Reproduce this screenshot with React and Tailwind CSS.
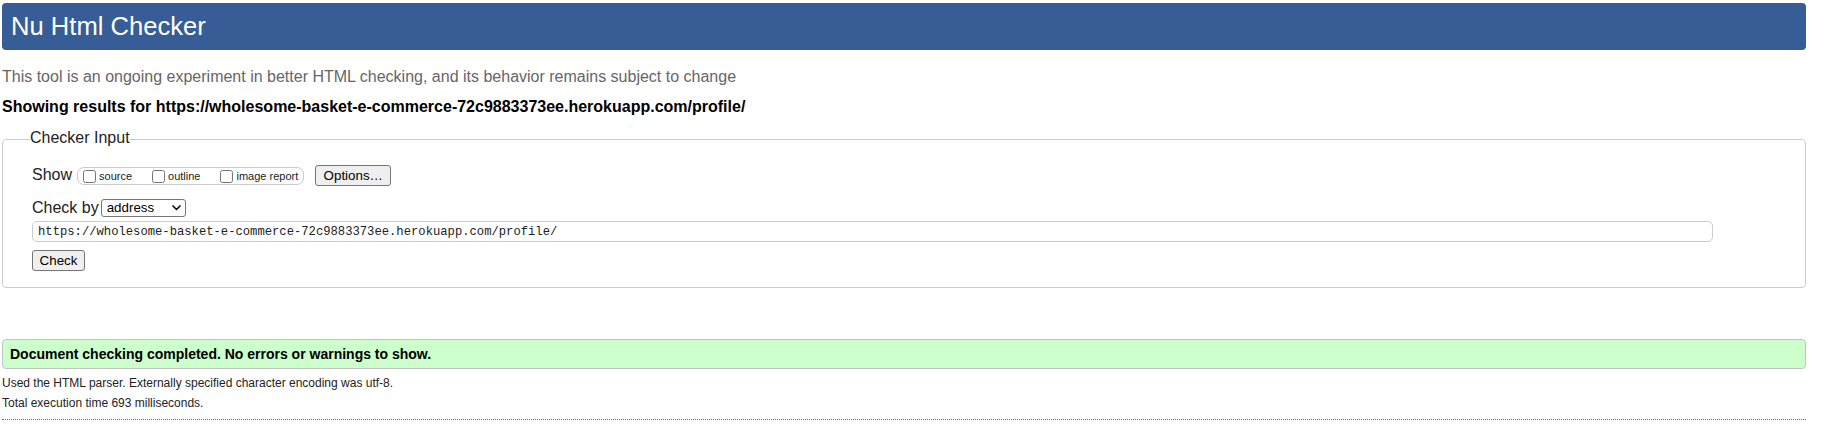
export default function App() {
  const url = 'https://wholesome-basket-e-commerce-72c9883373ee.herokuapp.com/profile/';

  return (
    <div className="min-h-screen bg-white font-['Liberation_Sans',Arial,sans-serif] text-black">
      <div className="ml-[2px] w-[1804px] pt-[3px]">
        {/* Title bar */}
        <h1 className="h-[47px] rounded-[4px] bg-[#365D95] pl-[9px] text-[25.6px] font-normal leading-[46px] text-white">
          Nu Html Checker
        </h1>

        <p className="mt-[17px] text-[16px] leading-[20px] text-[#666]">
          This tool is an ongoing experiment in better HTML checking, and its behavior remains subject to change
        </p>
        <p className="mt-[10px] text-[16px] font-bold leading-[20px]">Showing results for {url}</p>

        {/* Checker input */}
        <fieldset className="mt-[11px] rounded-[4px] border border-[#ccc] pb-[16px] pl-[29px]">
          <legend className="-ml-[2px] pb-[2px] text-[16px] leading-[20px] text-[#222]">Checker Input</legend>

          <div className="mt-[15px] flex items-start">
            <span className="text-[16px] leading-[20px] text-[#222]">Show</span>
            <div className="ml-[5px] mt-[2px] flex h-[18px] items-center gap-[20px] rounded-[7px] border border-[#ccc] px-[5px]">
              {['source', 'outline', 'image report'].map((label) => (
                <label key={label} className="flex items-center text-[11px] leading-[13px] text-[#222]">
                  <input type="checkbox" className="m-0 h-[13px] w-[13px]" />
                  <span className="ml-[3px]">{label}</span>
                </label>
              ))}
            </div>
            <button className="ml-[11px] h-[21px] w-[76px] rounded-[3px] border border-[#767676] bg-[#efefef] text-[13.33px] leading-[19px]">
              Options…
            </button>
          </div>

          <div className="mt-[13px] flex items-start">
            <span className="text-[16px] leading-[18px] text-[#222]">Check by</span>
            <div className="ml-[2px] flex h-[18px] w-[85px] items-center justify-between rounded-[3px] border border-[#767676] bg-white pl-[5px] pr-[4px] text-[13.33px] leading-[16px]">
              <span>address</span>
              <svg width="9" height="6" viewBox="0 0 9 6" fill="none">
                <path d="M1 1l3.5 3.5L8 1" stroke="#111" strokeWidth="1.7" strokeLinecap="round" strokeLinejoin="round" />
              </svg>
            </div>
          </div>

          <input
            readOnly
            value={url}
            className="mt-[4px] block h-[21px] w-[1681px] rounded-[5px] border border-[#ccc] px-[5px] font-['Liberation_Mono',monospace] text-[12.2px] text-[#222] outline-none"
          />

          <button className="mt-[8px] block h-[21px] w-[53px] rounded-[3px] border border-[#767676] bg-[#efefef] text-[13.33px] leading-[19px]">
            Check
          </button>
        </fieldset>

        {/* Results */}
        <div className="mt-[51px] h-[30px] rounded-[4px] border border-[#c3c3c3] bg-[#ccffcc] pl-[7px] text-[14px] font-bold leading-[28px]">
          Document checking completed. No errors or warnings to show.
        </div>
        <p className="mt-[6px] text-[12px] leading-[16px] text-[#222]">
          Used the HTML parser. Externally specified character encoding was utf-8.
        </p>
        <p className="mt-[4px] text-[12px] leading-[16px] text-[#222]">Total execution time 693 milliseconds.</p>
        <div className="mt-[8px] border-t border-dotted border-[#666]" />
      </div>
    </div>
  );
}
